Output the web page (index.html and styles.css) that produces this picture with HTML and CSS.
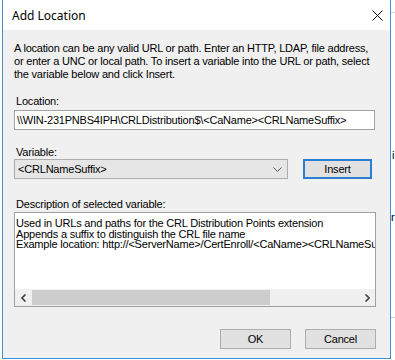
FILE: index.html
```html
<!DOCTYPE html>
<html lang="en">
  <head>
    <meta charset="UTF-8" />
    <title>Add Location</title>
    <link rel="stylesheet" href="styles.css">
  </head>
  <body>
    <div class="screen">
      <div class="dialog">
        <div class="titlebar">
          <span class="title">Add Location</span>
          <svg class="close" width="11" height="11" viewBox="0 0 11 11">
            <path d="M0.5 0.5 L10.5 10.5 M10.5 0.5 L0.5 10.5" stroke="#111" stroke-width="1" fill="none" />
          </svg>
        </div>

        <div class="body">
          <p class="intro">
            A location can be any valid URL or path. Enter an HTTP, LDAP, file address,<br>
            or enter a UNC or local path. To insert a variable into the URL or path, select<br>
            the variable below and click Insert.
          </p>

          <div class="label">Location:</div>
          <div class="textbox">\\WIN-231PNBS4IPH\CRLDistribution$\&lt;CaName&gt;&lt;CRLNameSuffix&gt;</div>

          <div class="label label-var">Variable:</div>
          <div class="var-row">
            <div class="combo">
              <span>&lt;CRLNameSuffix&gt;</span>
              <svg width="9" height="5" viewBox="0 0 9 5">
                <path d="M0.5 0.5 L4.5 4.5 L8.5 0.5" stroke="#555" stroke-width="1" fill="none" />
              </svg>
            </div>
            <div class="btn btn-default">Insert</div>
          </div>

          <div class="label label-desc">Description of selected variable:</div>
          <div class="descbox">
            <div class="desc-text">
              <div>Used in URLs and paths for the CRL Distribution Points extension</div>
              <div>Appends a suffix to distinguish the CRL file name</div>
              <div>Example location: http://&lt;ServerName&gt;/CertEnroll/&lt;CaName&gt;&lt;CRLNameSuffix&gt;&lt;DeltaCRLAllowed&gt;.crl</div>
            </div>
            <div class="hscroll">
              <div class="arrow">
                <svg width="6" height="8" viewBox="0 0 6 8"><path d="M4.5 0.5 L1 4 L4.5 7.5" stroke="#444" stroke-width="1.6" fill="none" /></svg>
              </div>
              <div class="track"><div class="thumb"></div></div>
              <div class="arrow">
                <svg width="6" height="8" viewBox="0 0 6 8"><path d="M1.5 0.5 L5 4 L1.5 7.5" stroke="#444" stroke-width="1.6" fill="none" /></svg>
              </div>
            </div>
          </div>

          <div class="actions">
            <div class="btn">OK</div>
            <div class="btn">Cancel</div>
          </div>
        </div>
      </div>

      <div class="behind">
        <div class="behind-line"></div>
        <div class="behind-i">i</div>
        <div class="behind-r">r</div>
        <div class="behind-line behind-line-low"></div>
      </div>
    </div>
  </body>
</html>
```

FILE: styles.css
```css
* {
  margin: 0;
  padding: 0;
  box-sizing: border-box;
}

body {
  background: #fff;
  font-family: "Liberation Sans", Arial, sans-serif;
  font-size: 11px;
  color: #000;
  width: 395px;
  height: 360px;
  overflow: hidden;
}

.screen {
  display: flex;
  padding-left: 2px;
}

.dialog {
  width: 389px;
  height: 359px;
  border: 1px solid #3f8fd2;
  border-top: none;
  background: #f0f0f0;
  display: flex;
  flex-direction: column;
}

.titlebar {
  height: 30px;
  background: #fff;
  display: flex;
  align-items: center;
  justify-content: space-between;
  padding: 0 7px 0 9px;
}

.title {
  font-family: "Noto Sans", "Open Sans", sans-serif;
  font-size: 12px;
  color: #000;
}

.close {
  margin-top: 1px;
}

.body {
  padding: 12px 0 0 11px;
  letter-spacing: -0.2px;
}

.intro {
  line-height: 13px;
  white-space: nowrap;
}

.label {
  line-height: 13px;
  margin-top: 14px;
  padding-left: 2px;
}

.label-var {
  margin-top: 16px;
}

.label-desc {
  margin-top: 19px;
}

.textbox {
  width: 361px;
  height: 20px;
  margin-top: 2px;
  background: #fff;
  border: 1px solid #a3a3a3;
  padding: 0 2px;
  line-height: 18px;
  white-space: nowrap;
}

.var-row {
  display: flex;
  align-items: flex-start;
}

.combo {
  width: 274px;
  height: 20px;
  background: #e6e6e6;
  border: 1px solid #adadad;
  display: flex;
  align-items: center;
  justify-content: space-between;
  padding: 0 5px 0 3px;
}

.btn {
  width: 71px;
  height: 20px;
  background: #e1e1e1;
  border: 1px solid #adadad;
  display: flex;
  align-items: center;
  justify-content: center;
}

.btn-default {
  width: 69px;
  margin-left: 15px;
  border: 2px solid #2a7fd4;
}

.descbox {
  width: 362px;
  height: 95px;
  margin-top: 1px;
  background: #fff;
  border: 1px solid #a0a0a0;
  display: flex;
  flex-direction: column;
  justify-content: space-between;
}

.desc-text {
  padding: 5px 0 0 1px;
  line-height: 10.5px;
  white-space: nowrap;
  overflow: hidden;
}

.hscroll {
  height: 17px;
  display: flex;
  background: #f0f0f0;
}

.arrow {
  width: 17px;
  display: flex;
  align-items: center;
  justify-content: center;
}

.track {
  flex: 1;
  padding: 1px 0;
}

.thumb {
  width: 238px;
  height: 15px;
  background: #cdcdcd;
}

.actions {
  display: flex;
  justify-content: flex-end;
  gap: 14px;
  width: 362px;
  margin-top: 22px;
}

.behind {
  flex: 1;
  background: #fff;
  font-size: 11px;
  color: #000;
}

.behind-line {
  height: 1px;
  background: #d4d4d4;
  margin-top: 12px;
}

.behind-i {
  margin-top: 136px;
  padding-left: 1px;
  line-height: 12px;
}

.behind-r {
  margin-top: 50px;
  line-height: 12px;
}

.behind-line-low {
  margin-top: 94px;
}
```
